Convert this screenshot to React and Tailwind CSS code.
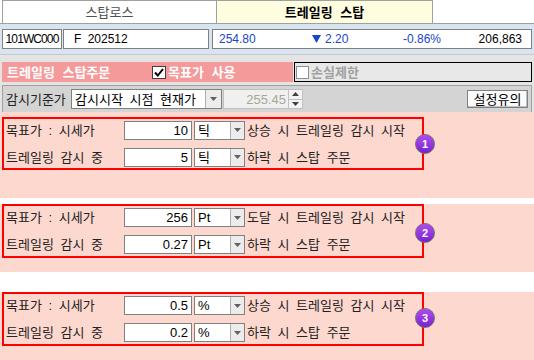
import React from 'react';

const font = { fontFamily: '"Liberation Sans", "Noto Sans CJK KR", sans-serif' };

const sections = [
    {
        n: 1,
        wrap: 'h-[86px] pt-[5px]',
        box: 'h-[53px]',
        badge: 'top-[22px]',
        rows: [
            { label: '목표가 : 시세가', value: '10', unit: '틱', text: '상승 시 트레일링 감시 시작' },
            { label: '트레일링 감시 중', value: '5', unit: '틱', text: '하락 시 스탑 주문' },
        ],
    },
    {
        n: 2,
        wrap: 'h-[68px] mt-[6px]',
        box: 'h-[54px]',
        badge: 'top-[19px]',
        rows: [
            { label: '목표가 : 시세가', value: '256', unit: 'Pt', text: '도달 시 트레일링 감시 시작' },
            { label: '트레일링 감시 중', value: '0.27', unit: 'Pt', text: '하락 시 스탑 주문' },
        ],
    },
    {
        n: 3,
        wrap: 'h-[68px] mt-[20px]',
        box: 'h-[54px]',
        badge: 'top-[16px]',
        rows: [
            { label: '목표가 : 시세가', value: '0.5', unit: '%', text: '상승 시 트레일링 감시 시작' },
            { label: '트레일링 감시 중', value: '0.2', unit: '%', text: '하락 시 스탑 주문' },
        ],
    },
];

const DropBtn = () => (
    <div className="w-[14px] h-full bg-[#ececec] border-l border-[#b0b0b0] flex items-center justify-center">
        <svg width="7" height="4" viewBox="0 0 7 4">
            <path d="M0 0H7L3.5 4Z" fill="#606060" />
        </svg>
    </div>
);

const Row = ({ row }) => (
    <div className="flex items-center h-[19px]">
        <div className="w-[118px] text-[13px] text-[#222] [word-spacing:3px]">{row.label}</div>
        <div className="w-[68px] h-[19px] bg-white border border-[#808080] flex items-center justify-end pr-[3px] text-[13px] text-black">
            {row.value}
        </div>
        <div className="ml-[2px] w-[51px] h-[19px] bg-white border border-[#808080] flex items-center">
            <span className="flex-1 pl-[3px] text-[13px] text-black">{row.unit}</span>
            <DropBtn />
        </div>
        <div className="ml-[2px] text-[13px] text-[#222] [word-spacing:3px] whitespace-nowrap">{row.text}</div>
    </div>
);

const Section = ({ s }) => (
    <div className={`relative bg-[#fcd8cf] ${s.wrap}`}>
        <div className={`ml-[2px] w-[422px] border-2 border-[#ff0000] pl-[2px] flex flex-col justify-center gap-[8px] ${s.box}`}>
            {s.rows.map((r) => (
                <Row key={r.label} row={r} />
            ))}
        </div>
        <div
            className={`absolute left-[415px] w-[20px] h-[20px] rounded-full border border-[#707070] bg-gradient-to-b from-[#b04cf0] to-[#7a1fd0] flex items-center justify-center text-white text-[11px] font-bold ${s.badge}`}
        >
            {s.n}
        </div>
    </div>
);

export default function App() {
    return (
        <div className="w-[534px] h-[360px] bg-white overflow-hidden leading-none" style={font}>
            {/* tabs */}
            <div className="flex h-[24px] border-b border-[#a0a0a0]">
                <div className="ml-[2px] w-[215px] border border-b-0 border-[#a0a0a0] flex items-center justify-center text-[13px] text-[#505050]">
                    스탑로스
                </div>
                <div className="w-[216px] bg-[#fffde0] border-r border-t border-[#a0a0a0] flex items-center justify-center text-[13px] font-bold text-black [word-spacing:4px]">
                    트레일링 스탑
                </div>
            </div>

            {/* symbol row */}
            <div className="h-[30px] bg-[#d8e4f0] flex items-center px-[2px]">
                <div className="w-[60px] h-[20px] bg-white border border-[#808080] flex items-center justify-center text-[12px] tracking-[-0.9px] text-black">
                    101WC000
                </div>
                <div className="ml-[1px] w-[146px] h-[20px] bg-white border border-[#808080] flex items-center pl-[10px] text-[12px] text-black [word-spacing:3px]">
                    F 202512
                </div>
                <div className="ml-[3px] flex-1 h-[20px] bg-white border border-[#808080] flex items-center text-[12px]">
                    <span className="w-[99px] pl-[6px] text-[#1a46c8]">254.80</span>
                    <span className="w-[91px] text-[#1a46c8] flex items-center gap-[4px]">
                        <svg width="9" height="8" viewBox="0 0 9 8">
                            <path d="M0 0H9L4.5 8Z" fill="#1a46c8" />
                        </svg>
                        2.20
                    </span>
                    <span className="text-[#1a46c8]">-0.86%</span>
                    <span className="ml-auto pr-[9px] text-black">206,863</span>
                </div>
            </div>

            {/* options */}
            <div className="bg-[#e4e4e4] h-[58px] border-t border-[#c8c8c8] pt-[7px]">
                <div className="flex h-[20px] px-[2px]">
                    <div className="w-[291px] bg-[#f49a9a] flex items-center text-white font-bold text-[13px] [word-spacing:4px]">
                        <span className="pl-[5px] w-[150px]">트레일링 스탑주문</span>
                        <span className="w-[14px] h-[13px] bg-white border border-[#404040] flex items-center justify-center">
                            <svg width="10" height="9" viewBox="0 0 10 9">
                                <path d="M1 4.5L3.8 7.5L9 1" stroke="#000" strokeWidth="2" fill="none" />
                            </svg>
                        </span>
                        <span className="ml-[2px]">목표가 사용</span>
                    </div>
                    <div className="ml-[1px] flex-1 bg-[#e8e8e8] border border-black flex items-center">
                        <span className="ml-[1px] w-[13px] h-[13px] bg-white border border-[#909090]"></span>
                        <span className="ml-[2px] text-[13px] font-bold text-[#a0a0a0]">손실제한</span>
                    </div>
                </div>
                <div className="mt-[3px] mx-[2px] h-[28px] bg-[#d4d4d4] border border-[#a0a0a0] flex items-center">
                    <span className="pl-[3px] w-[68px] text-[13px] text-[#222]">감시기준가</span>
                    <div className="w-[151px] h-[20px] bg-white border border-[#808080] flex items-center">
                        <span className="flex-1 pl-[3px] text-[13px] text-black [word-spacing:3px]">감시시작 시점 현재가</span>
                        <div className="w-[16px] h-full bg-[#ececec] border-l border-[#b0b0b0] flex items-center justify-center">
                            <svg width="7" height="4" viewBox="0 0 7 4">
                                <path d="M0 0H7L3.5 4Z" fill="#606060" />
                            </svg>
                        </div>
                    </div>
                    <div className="ml-[1px] w-[80px] h-[20px] bg-[#f0f0f0] border border-[#c0c0c0] flex items-center">
                        <span className="flex-1 text-right pr-[2px] text-[13px] text-[#a8a890]">255.45</span>
                        <div className="w-[14px] h-full flex flex-col border-l border-[#c0c0c0]">
                            <div className="flex-1 bg-[#f4f4f4] border-b border-[#c0c0c0] flex items-center justify-center">
                                <svg width="7" height="4" viewBox="0 0 7 4">
                                    <path d="M0 4H7L3.5 0Z" fill="#404040" />
                                </svg>
                            </div>
                            <div className="flex-1 bg-[#f4f4f4] flex items-center justify-center">
                                <svg width="7" height="4" viewBox="0 0 7 4">
                                    <path d="M0 0H7L3.5 4Z" fill="#404040" />
                                </svg>
                            </div>
                        </div>
                    </div>
                    <div className="ml-auto mr-[3px] w-[61px] h-[18px] bg-[#fafafa] border border-[#808080] shadow-[inset_-1px_-1px_0_#c0c0c0] flex items-center justify-center text-[13px] text-black">
                        설정유의
                    </div>
                </div>
            </div>

            {sections.map((s) => (
                <Section key={s.n} s={s} />
            ))}
        </div>
    );
}
